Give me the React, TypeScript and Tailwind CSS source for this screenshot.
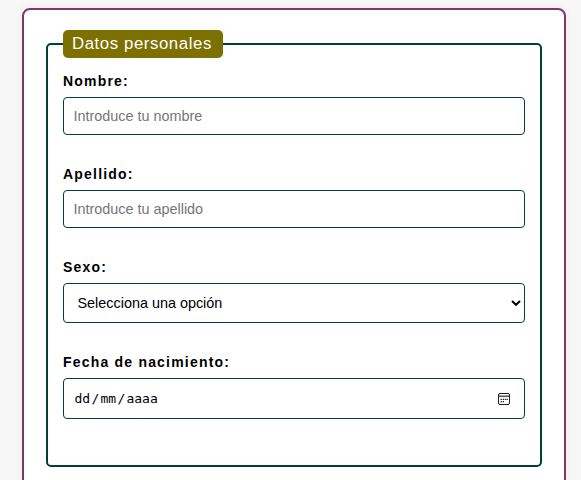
import type { ReactNode } from "react";

function Field({ label, id, className, children }: { label: string; id: string; className: string; children: ReactNode }) {
  return (
    <div className={`flex flex-col ${className}`}>
      <label htmlFor={id} className="mb-2 h-4 text-[14px] leading-4 font-bold tracking-[1.2px]">
        {label}
      </label>
      {children}
    </div>
  );
}

function TextInput({ id, placeholder }: { id: string; placeholder: string }) {
  return (
    <input
      id={id}
      type="text"
      placeholder={placeholder}
      className="h-[38px] w-full rounded-[4px] border border-[#004037] bg-white px-[9.5px] text-[14.4px] placeholder:text-[#757575]"
    />
  );
}

function CalendarIcon() {
  return (
    <svg width="12" height="12" viewBox="0 0 12 12" fill="none">
      <rect x="0.5" y="0.5" width="11" height="11" rx="1.5" stroke="#222" />
      <path d="M1 2.5H11" stroke="#aaa" />
      <path d="M1 3.5H11" stroke="#555" />
      <path d="M4.7 6.4h1.3M6.8 6.4h1.3M8.6 6.4h1.2M2.6 6.4h1.3M2.6 8.7h1.3M4.7 8.7h1.3" stroke="#222" strokeWidth="1.3" />
    </svg>
  );
}

export default function App() {
  return (
    <main className="h-[480px] overflow-hidden bg-[#f7f7f7] pt-2 pl-[22px] font-['Liberation_Sans',Arial,sans-serif] text-black">
      <form className="h-[560px] w-[544px] rounded-lg border-2 border-[#843468] bg-white px-[22px] py-5 shadow-[0_0_10px_rgba(0,0,0,0.06)]">
        <fieldset className="h-[437px] rounded-[5px] border-2 border-[#004037] px-[15px]">
          <legend className="h-7 w-[160px] rounded-[5px] bg-[#7b7000] pl-[9px] text-[16.8px] leading-[27px] tracking-[0.58px] whitespace-nowrap text-white">
            Datos personales
          </legend>
          <Field label="Nombre:" id="nombre" className="mt-[15px]">
            <TextInput id="nombre" placeholder="Introduce tu nombre" />
          </Field>
          <Field label="Apellido:" id="apellido" className="mt-[31px]">
            <TextInput id="apellido" placeholder="Introduce tu apellido" />
          </Field>
          <Field label="Sexo:" id="sexo" className="mt-[31px]">
            <div className="grid">
              <select
                id="sexo"
                className="col-start-1 row-start-1 h-10 w-full appearance-none rounded-[4px] border border-[#004037] bg-white px-[13.5px] pt-px text-[14.4px]"
              >
                <option>Selecciona una opción</option>
              </select>
              <svg
                className="pointer-events-none col-start-1 row-start-1 mr-1 self-center justify-self-end"
                width="10"
                height="6"
                viewBox="0 0 10 6"
                fill="none"
              >
                <path d="M1 1L5 4.8L9 1" stroke="#000" strokeWidth="2" />
              </svg>
            </div>
          </Field>
          <Field label="Fecha de nacimiento:" id="fecha" className="mt-[31px]">
            <div
              id="fecha"
              className="flex h-[41px] items-center justify-between rounded-[4px] border border-[#004037] pr-[14px] pl-[10.5px] font-['DejaVu_Sans_Mono',monospace] text-[13px]"
            >
              <span className="flex gap-[1.25px]">
                <span>dd</span>
                <span>/</span>
                <span>mm</span>
                <span>/</span>
                <span>aaaa</span>
              </span>
              <CalendarIcon />
            </div>
          </Field>
        </fieldset>
      </form>
    </main>
  );
}
